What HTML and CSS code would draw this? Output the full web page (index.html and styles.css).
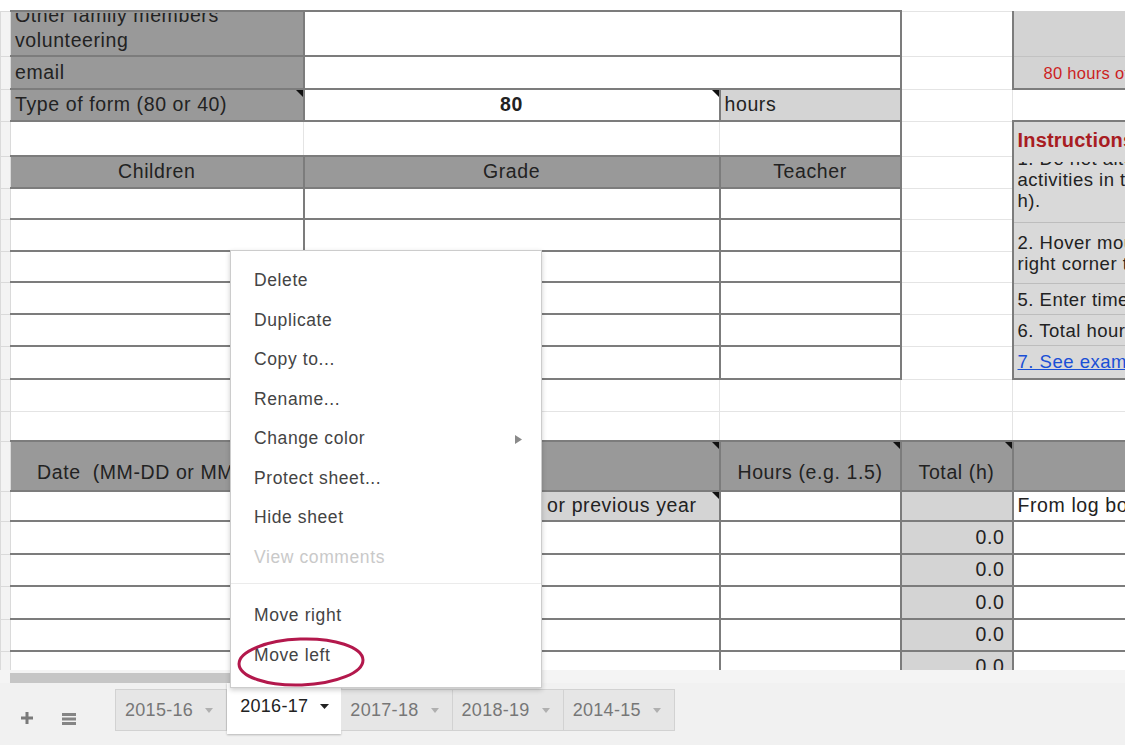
FILE: index.html
```html
<!DOCTYPE html>
<html lang="en">
<head>
    <meta charset="UTF-8">
    <meta name="viewport" content="width=device-width, initial-scale=1.0">
    <title>Volunteer hours log</title>
    <link rel="stylesheet" href="styles.css">
</head>
<body>
    <div class="page">
        <div class="sheet">
            <table class="grid">
                <colgroup>
                    <col class="c-strip">
                    <col class="c-a">
                    <col class="c-b">
                    <col class="c-c">
                    <col class="c-d">
                    <col class="c-e">
                </colgroup>

                <!-- family info block -->
                <tr class="h45">
                    <td class="strip"></td>
                    <td class="b dark first"><div class="wrap2">Other family members<br>volunteering</div></td>
                    <td class="b" colspan="2"></td>
                    <td></td>
                    <td class="goal goal-top"></td>
                </tr>
                <tr class="h33">
                    <td class="strip"></td>
                    <td class="b dark first">email</td>
                    <td class="b" colspan="2"></td>
                    <td></td>
                    <td class="goal goal-bottom"><span class="goal-text">80 hours of volunteering required</span></td>
                </tr>
                <tr class="h32">
                    <td class="strip"></td>
                    <td class="b dark first note">Type of form (80 or 40)</td>
                    <td class="b bold center note">80</td>
                    <td class="b light">hours</td>
                    <td></td>
                    <td></td>
                </tr>
                <tr class="h35">
                    <td class="strip"></td>
                    <td></td>
                    <td></td>
                    <td class="edge-r"></td>
                    <td></td>
                    <td class="instr-cell" rowspan="8">
                        <div class="instr">
                            <div class="instr-title">Instructions</div>
                            <div class="instr-item tall">1. Do not alter formulas. Enter volunteer<br>activities in the log below (hours in<br>h).</div>
                            <div class="instr-item mid">2. Hover mouse over cells with a black triangle<br>right corner to see comments.</div>
                            <div class="instr-item">5. Enter time in hours (e.g. 1.5)</div>
                            <div class="instr-item">6. Total hours are calculated</div>
                            <div class="instr-item last"><a href="#">7. See example</a></div>
                        </div>
                    </td>
                </tr>

                <!-- children -->
                <tr class="h32">
                    <td class="strip"></td>
                    <td class="b dark first center">Children</td>
                    <td class="b dark center">Grade</td>
                    <td class="b dark center">Teacher</td>
                    <td></td>
                </tr>
                <tr class="h31"><td class="strip"></td><td class="b first"></td><td class="b"></td><td class="b"></td><td></td></tr>
                <tr class="h32"><td class="strip"></td><td class="b first"></td><td class="b"></td><td class="b"></td><td></td></tr>
                <tr class="h31"><td class="strip"></td><td class="b first"></td><td class="b"></td><td class="b"></td><td></td></tr>
                <tr class="h32"><td class="strip"></td><td class="b first"></td><td class="b"></td><td class="b"></td><td></td></tr>
                <tr class="h32"><td class="strip"></td><td class="b first"></td><td class="b"></td><td class="b"></td><td></td></tr>
                <tr class="h33"><td class="strip"></td><td class="b first"></td><td class="b"></td><td class="b"></td><td></td></tr>

                <tr class="h32"><td class="strip"></td><td></td><td></td><td></td><td></td><td></td></tr>
                <tr class="h30"><td class="strip"></td><td></td><td></td><td></td><td></td><td></td></tr>

                <!-- log -->
                <tr class="h50">
                    <td class="strip"></td>
                    <td class="b dark first bottom date-head">Date&nbsp;&nbsp;(MM-DD or MM-DD-YY)</td>
                    <td class="b dark bottom note act-head">Activity / Event</td>
                    <td class="b dark bottom center note">Hours (e.g. 1.5)</td>
                    <td class="b dark bottom center note">Total (h)</td>
                    <td class="b dark open"></td>
                </tr>
                <tr class="h30">
                    <td class="strip"></td>
                    <td class="b first"></td>
                    <td class="b light right carry note">Hours from log or previous year</td>
                    <td class="b"></td>
                    <td class="b light"></td>
                    <td class="b open">From log book (previous year)</td>
                </tr>
                <tr class="h33"><td class="strip"></td><td class="b first"></td><td class="b"></td><td class="b"></td><td class="b light right total">0.0</td><td class="b open"></td></tr>
                <tr class="h32"><td class="strip"></td><td class="b first"></td><td class="b"></td><td class="b"></td><td class="b light right total">0.0</td><td class="b open"></td></tr>
                <tr class="h33"><td class="strip"></td><td class="b first"></td><td class="b"></td><td class="b"></td><td class="b light right total">0.0</td><td class="b open"></td></tr>
                <tr class="h32"><td class="strip"></td><td class="b first"></td><td class="b"></td><td class="b"></td><td class="b light right total">0.0</td><td class="b open"></td></tr>
                <tr class="h32"><td class="strip"></td><td class="b first"></td><td class="b"></td><td class="b"></td><td class="b light right total">0.0</td><td class="b open"></td></tr>
            </table>
        </div>

        <div class="scroll-track"><div class="scroll-thumb"></div></div>

        <div class="tabbar">
            <svg class="tool-add" width="14" height="14" viewBox="0 0 14 14">
                <path d="M7 1v12M1 7h12" stroke="#7a7a7a" stroke-width="3"/>
            </svg>
            <svg class="tool-list" width="14" height="12" viewBox="0 0 14 12">
                <rect x="0" y="0" width="14" height="3" fill="#858585"/>
                <rect x="0" y="4.5" width="14" height="3" fill="#858585"/>
                <rect x="0" y="9" width="14" height="3" fill="#858585"/>
            </svg>
            <div class="tabs">
                <div class="tab">2015-16 <svg class="caret" width="8" height="5" viewBox="0 0 8 5"><path d="M0 0h8L4 5z"/></svg></div>
                <div class="tab active">2016-17 <svg class="caret" width="9" height="5" viewBox="0 0 9 5"><path d="M0 0h9L4.5 5z"/></svg></div>
                <div class="tab">2017-18 <svg class="caret" width="8" height="5" viewBox="0 0 8 5"><path d="M0 0h8L4 5z"/></svg></div>
                <div class="tab">2018-19 <svg class="caret" width="8" height="5" viewBox="0 0 8 5"><path d="M0 0h8L4 5z"/></svg></div>
                <div class="tab">2014-15 <svg class="caret" width="8" height="5" viewBox="0 0 8 5"><path d="M0 0h8L4 5z"/></svg></div>
            </div>
        </div>

        <!-- sheet tab context menu -->
        <div class="menu">
            <div class="menu-item">Delete</div>
            <div class="menu-item">Duplicate</div>
            <div class="menu-item">Copy to...</div>
            <div class="menu-item">Rename...</div>
            <div class="menu-item sub">Change color
                <svg class="sub-arrow" width="7" height="9" viewBox="0 0 7 9"><path d="M0 0l7 4.5L0 9z"/></svg>
            </div>
            <div class="menu-item">Protect sheet...</div>
            <div class="menu-item">Hide sheet</div>
            <div class="menu-item disabled">View comments</div>
            <div class="menu-sep"></div>
            <div class="menu-item">Move right</div>
            <div class="menu-item">Move left</div>

            <svg class="circle" width="132" height="54" viewBox="0 0 132 54">
                <ellipse cx="66" cy="27" rx="62" ry="23" fill="none" stroke="#b3184c" stroke-width="3" transform="rotate(-2 66 27)"/>
            </svg>
        </div>
    </div>
</body>
</html>
```

FILE: styles.css
```css
body {
    margin: 0;
    background: #fff;
    font-family: "Liberation Sans", Arial, sans-serif;
    color: #222;
}

.page {
    position: relative;
    width: 1125px;
    height: 756px;
    overflow: hidden;
    padding-top: 10px;
    box-sizing: border-box;
}

.sheet {
    height: 660px;
    overflow: hidden;
}

.grid {
    border-collapse: collapse;
    table-layout: fixed;
    width: 1127px;
    font-size: 19.5px;
    letter-spacing: 0.6px;
}

.c-strip { width: 10px; }
.c-a { width: 293px; }
.c-b { width: 416px; }
.c-c { width: 181px; }
.c-d { width: 112px; }
.c-e { width: 115px; }

.h30 { height: 30px; }
.h31 { height: 31px; }
.h32 { height: 32px; }
.h33 { height: 33px; }
.h35 { height: 35px; }
.h45 { height: 45px; }
.h50 { height: 50px; }

.grid td {
    border: 1px solid #e4e4e4;
    padding: 0 4px;
    white-space: nowrap;
    overflow: hidden;
    line-height: 1;
    vertical-align: middle;
}

.grid td.strip {
    background: #f3f3f3;
    border-color: #dadada;
    padding: 0;
}

/* bordered cells */
.grid td.b {
    border: 2px solid #7c7c7c;
}

.grid td.first {
    border-left: 1px solid #cfcfcf;
}

.grid td.edge-r {
    border-right: 2px solid #7c7c7c;
}

.grid td.open {
    border-right: none;
}

.dark { background: #999; }
.light { background: #d4d4d4; }
.center { text-align: center; }
.right { text-align: right; }
.bold { font-weight: bold; }
.bottom { vertical-align: bottom !important; padding-bottom: 8px !important; }

.note { position: relative; }
.note::after {
    content: "";
    position: absolute;
    top: 0;
    right: 0;
    border-top: 7px solid #111;
    border-left: 7px solid transparent;
}

.wrap2 {
    height: 41px;
    display: flex;
    flex-direction: column;
    justify-content: flex-end;
    line-height: 25px;
    padding-bottom: 1px;
    box-sizing: border-box;
    overflow: hidden;
}

.date-head { padding-left: 26px !important; }
.act-head { padding-left: 90px !important; }
.carry { padding-right: 22px !important; }
.total { padding-right: 7px !important; }

/* goal box, top right */
.grid td.goal {
    background: #d3d3d3;
    border-left: 2px solid #7c7c7c;
    border-right: none;
}
.grid td.goal-top { border-top: none; border-bottom: 1px solid #c2c2c2; }
.grid td.goal-bottom { border-bottom: 2px solid #7c7c7c; }

.goal-text {
    color: #cc1f1f;
    font-size: 16.5px;
    letter-spacing: 0.3px;
    padding-left: 26px;
}

/* instructions box */
.grid td.instr-cell {
    padding: 0;
    vertical-align: top;
    border-left: 2px solid #7c7c7c;
    border-top: 2px solid #7c7c7c;
    border-bottom: 2px solid #7c7c7c;
    border-right: none;
    background: #d9d9d9;
}

.instr {
    height: 254px;
    overflow: hidden;
    font-size: 18.5px;
    letter-spacing: 0.5px;
}

.instr-title {
    height: 40px;
    padding: 4px 0 0 4px;
    box-sizing: border-box;
    color: #a81c22;
    font-weight: bold;
    font-size: 20px;
    letter-spacing: 0.2px;
    line-height: 28px;
}

.instr-item {
    height: 31px;
    padding: 0 4px;
    box-sizing: border-box;
    border-top: 1px solid #bdbdbd;
    display: flex;
    flex-direction: column;
    justify-content: center;
    line-height: 21px;
    overflow: hidden;
}

.instr-item.tall {
    height: 60px;
    border-top: none;
    justify-content: flex-end;
    padding-bottom: 11px;
}

.instr-item.mid {
    height: 61px;
}

.instr-item a {
    color: #1a4fd6;
}

/* scroll + tabs */
.scroll-track {
    height: 13px;
    background: #f4f4f4;
    padding-top: 3px;
    box-sizing: border-box;
}

.scroll-thumb {
    margin-left: 10px;
    width: 510px;
    height: 10px;
    background: #c6c6c6;
}

.tabbar {
    height: 62px;
    background: #f1f1f1;
    display: flex;
    align-items: flex-start;
}

.tool-add {
    margin: 28px 0 0 20px;
}

.tool-list {
    margin: 30px 0 0 28px;
}

.tabs {
    display: flex;
    margin: 6px 0 0 39px;
}

.tab {
    height: 42px;
    padding: 0 13px 0 9px;
    display: flex;
    align-items: center;
    gap: 12px;
    background: #e6e6e6;
    border: 1px solid #d2d2d2;
    border-left: none;
    box-sizing: border-box;
    color: #777;
    font-size: 18px;
    letter-spacing: 0.3px;
}

.tab:first-child {
    border-left: 1px solid #d2d2d2;
}

.tab .caret { fill: #b0b0b0; }

.tab.active {
    background: #fff;
    color: #222;
    height: 51px;
    margin-top: -6px;
    padding: 0 12px 4px 13px;
    border: none;
    box-shadow: 0 1px 2px rgba(0, 0, 0, 0.25);
}

.tab.active .caret { fill: #222; }

/* context menu */
.menu {
    position: absolute;
    left: 230px;
    top: 250px;
    width: 312px;
    height: 438px;
    box-sizing: border-box;
    padding-top: 10px;
    background: #fff;
    border: 1px solid rgba(0, 0, 0, 0.2);
    box-shadow: 0 2px 5px rgba(0, 0, 0, 0.2);
    font-size: 17.5px;
    letter-spacing: 0.6px;
    color: #444;
}

.menu-item {
    height: 39.5px;
    line-height: 39.5px;
    padding-left: 23px;
    position: relative;
}

.menu-item.disabled {
    color: #c9c9c9;
}

.sub-arrow {
    position: absolute;
    right: 19px;
    top: 16px;
    fill: #8a8a8a;
}

.menu-sep {
    height: 1px;
    background: #ebebeb;
    margin: 6px 0 12px;
}

.circle {
    position: absolute;
    left: 4px;
    top: 384px;
}
```
